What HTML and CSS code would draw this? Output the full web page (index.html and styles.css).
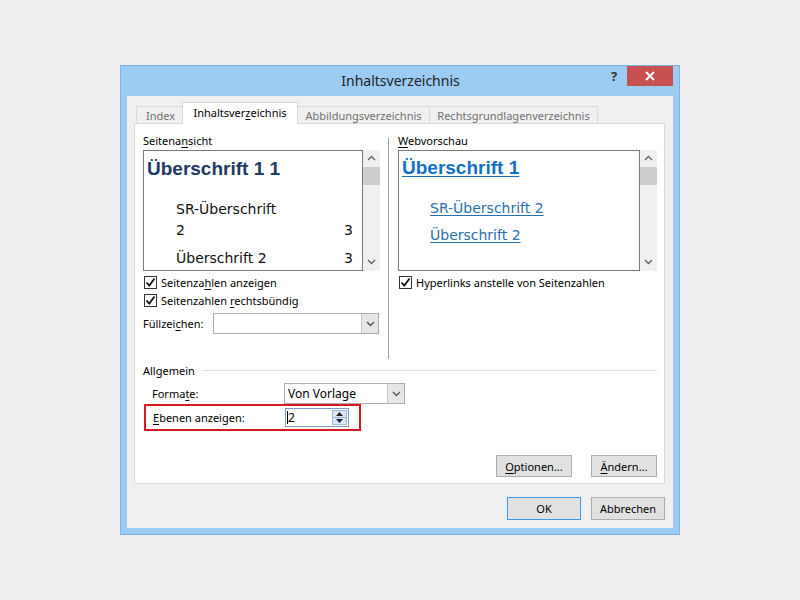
FILE: index.html
```html
<!DOCTYPE html>
<html lang="de">
<head>
  <meta charset="UTF-8">
  <title>Inhaltsverzeichnis</title>
  <link rel="stylesheet" href="styles.css">
</head>
<body>
  <div class="window">
    <div class="titlebar">
      <span class="title">Inhaltsverzeichnis</span>
      <span class="help">?</span>
      <span class="close">
        <svg width="10" height="10" viewBox="0 0 10 10"><path d="M1 1 L9 9 M9 1 L1 9" stroke="#fff" stroke-width="2"/></svg>
      </span>
    </div>

    <div class="client">
      <div class="tabs">
        <div class="tab tab-index">Index</div>
        <div class="tab tab-active">Inhaltsver<u>z</u>eichnis</div>
        <div class="tab tab-abb">Abbildungsverzeichnis</div>
        <div class="tab tab-rechts">Rechtsgrundlagenverzeichnis</div>
      </div>

      <div class="panel">
        <div class="columns">
          <div class="col col-left">
            <div class="label">Seitena<u>n</u>sicht</div>
            <div class="preview">
              <div class="preview-body print">
                <div class="h1">Überschrift 1 1</div>
                <div class="entry first">SR-Überschrift</div>
                <div class="entry row"><span>2</span><span>3</span></div>
                <div class="entry row last"><span>Überschrift 2</span><span>3</span></div>
              </div>
              <div class="scrollbar">
                <svg class="arrow" width="9" height="6" viewBox="0 0 9 6"><path d="M1 5 L4.5 1.5 L8 5" fill="none" stroke="#606060" stroke-width="1.3"/></svg>
                <div class="thumb"></div>
                <div class="track"></div>
                <svg class="arrow" width="9" height="6" viewBox="0 0 9 6"><path d="M1 1 L4.5 4.5 L8 1" fill="none" stroke="#606060" stroke-width="1.3"/></svg>
              </div>
            </div>
            <div class="check"><span class="box"><svg width="11" height="11" viewBox="0 0 11 11"><path d="M1.5 5.5 L4.3 8.5 L9.5 1.5" fill="none" stroke="#111" stroke-width="1.8"/></svg></span><span>Seitenza<u>h</u>len anzeigen</span></div>
            <div class="check"><span class="box"><svg width="11" height="11" viewBox="0 0 11 11"><path d="M1.5 5.5 L4.3 8.5 L9.5 1.5" fill="none" stroke="#111" stroke-width="1.8"/></svg></span><span>Seitenzahlen <u>r</u>echtsbündig</span></div>
            <div class="field fill">
              <span class="field-label">Füllzei<u>c</u>hen:</span>
              <div class="combo combo-fill">
                <span class="combo-value"></span>
                <span class="combo-btn"><svg width="9" height="6" viewBox="0 0 9 6"><path d="M1 1 L4.5 4.5 L8 1" fill="none" stroke="#555" stroke-width="1.4"/></svg></span>
              </div>
            </div>
          </div>

          <div class="divider"></div>

          <div class="col col-right">
            <div class="label"><u>W</u>ebvorschau</div>
            <div class="preview">
              <div class="preview-body web">
                <div class="h1"><a>Überschrift 1</a></div>
                <div class="entry first"><a>SR-Überschrift 2</a></div>
                <div class="entry"><a>Überschrift 2</a></div>
              </div>
              <div class="scrollbar">
                <svg class="arrow" width="9" height="6" viewBox="0 0 9 6"><path d="M1 5 L4.5 1.5 L8 5" fill="none" stroke="#606060" stroke-width="1.3"/></svg>
                <div class="thumb"></div>
                <div class="track"></div>
                <svg class="arrow" width="9" height="6" viewBox="0 0 9 6"><path d="M1 1 L4.5 4.5 L8 1" fill="none" stroke="#606060" stroke-width="1.3"/></svg>
              </div>
            </div>
            <div class="check"><span class="box"><svg width="11" height="11" viewBox="0 0 11 11"><path d="M1.5 5.5 L4.3 8.5 L9.5 1.5" fill="none" stroke="#111" stroke-width="1.8"/></svg></span><span>Hyperlinks anstelle von Seitenzahlen</span></div>
          </div>
        </div>

        <div class="group"><span>Allgemein</span><span class="group-line"></span></div>

        <div class="field row-formats">
          <span class="field-label">Forma<u>t</u>e:</span>
          <div class="combo combo-formats">
            <span class="combo-value">Von Vorlage</span>
            <span class="combo-btn"><svg width="9" height="6" viewBox="0 0 9 6"><path d="M1 1 L4.5 4.5 L8 1" fill="none" stroke="#555" stroke-width="1.4"/></svg></span>
          </div>
        </div>

        <div class="field row-levels">
          <span class="field-label"><u>E</u>benen anzeigen:</span>
          <div class="spinner">
            <span class="spin-value"><span class="caret"></span>2</span>
            <span class="spin-btns">
              <span class="spin-btn"><svg width="7" height="4" viewBox="0 0 7 4"><path d="M0 4 L3.5 0 L7 4 Z" fill="#222"/></svg></span>
              <span class="spin-btn"><svg width="7" height="4" viewBox="0 0 7 4"><path d="M0 0 L3.5 4 L7 0 Z" fill="#222"/></svg></span>
            </span>
          </div>
        </div>

        <div class="panel-buttons">
          <button class="btn btn-options"><u>O</u>ptionen...</button>
          <button class="btn btn-change"><u>Ä</u>ndern...</button>
        </div>
      </div>

      <div class="dialog-buttons">
        <button class="btn btn-ok">OK</button>
        <button class="btn btn-cancel">Abbrechen</button>
      </div>
    </div>
  </div>
</body>
</html>
```

FILE: styles.css
```css
body {
  margin: 0;
  background: #eeeeee;
  font-family: 'Noto Sans', sans-serif;
  font-size: 11px;
  color: #000;
}
u { text-decoration: underline; text-underline-offset: 2px; }

.window {
  margin: 65px 0 0 120px;
  width: 558px;
  height: 468px;
  background: #9ccbf3;
  border: 1px solid #7fb2e0;
  display: flex;
  flex-direction: column;
}
.titlebar {
  height: 30px;
  display: flex;
  align-items: flex-start;
}
.title {
  flex: 1;
  text-align: center;
  font-size: 14px;
  line-height: 29px;
  color: #222;
  padding-left: 72px;
}
.help {
  width: 12px;
  padding-left: 3px;
  font-size: 13px;
  font-weight: bold;
  color: #333;
  line-height: 20px;
  margin-right: 4px;
}
.close {
  width: 46px;
  height: 20px;
  background: #c75050;
  display: flex;
  align-items: center;
  justify-content: center;
  margin-right: 6px;
}

.client {
  flex: 1;
  margin: 0 6px 6px 6px;
  background: #f0f0f0;
  padding: 6px 8px 0 7px;
  display: flex;
  flex-direction: column;
}

.tabs {
  display: flex;
  align-items: flex-end;
  height: 21px;
  padding-left: 2px;
}
.tab {
  height: 16px;
  line-height: 17px;
  border: 1px solid #d9d9d9;
  border-bottom: none;
  margin-right: -1px;
  background: #f0f0f0;
  color: #707070;
  text-align: center;
}
.tab-index { width: 47px; }
.tab-abb { width: 131px; }
.tab-rechts { width: 167px; }
.tab-active {
  width: 114px;
  height: 21px;
  line-height: 19px;
  background: #fff;
  color: #000;
  position: relative;
  z-index: 1;
  margin: 0 -1px -1px -2px;
}

.panel {
  height: 350px;
  background: #fff;
  border: 1px solid #d9d9d9;
  padding: 9px 7px 0 8px;
  display: flex;
  flex-direction: column;
}

.columns {
  display: flex;
  height: 226px;
}
.col-left { width: 237px; }
.divider {
  width: 1px;
  background: #a0a0a0;
  margin: 5px 9px 0 8px;
}
.col-right { width: 259px; }

.label {
  height: 17px;
  line-height: 16px;
}
.preview {
  display: flex;
  height: 121px;
}
.preview-body {
  flex: 1;
  border: 1px solid #7a7a7a;
  background: #fff;
  overflow: hidden;
  padding: 0 9px 0 3px;
}
.scrollbar {
  width: 17px;
  background: #f0f0f0;
  display: flex;
  flex-direction: column;
  align-items: center;
}
.scrollbar .arrow { margin: 5px 0 6px; }
.scrollbar .thumb {
  width: 17px;
  height: 18px;
  background: #cdcdcd;
}
.scrollbar .track { flex: 1; }

.print .h1 {
  font-family: 'Liberation Sans', sans-serif;
  font-weight: bold;
  font-size: 19px;
  color: #1f3a63;
  margin-top: 6px;
  line-height: 24px;
}
.print .entry {
  font-family: 'DejaVu Sans', sans-serif;
  font-size: 14px;
  color: #111;
  margin-left: 29px;
  line-height: 21px;
}
.print .entry.first { margin-top: 18px; }
.print .row {
  display: flex;
  justify-content: space-between;
}
.print .row.last { margin-top: 7px; }

.web .h1 {
  font-family: 'Liberation Sans', sans-serif;
  font-weight: bold;
  font-size: 19px;
  color: #1271c4;
  margin-top: 5px;
  line-height: 24px;
}
.web a {
  text-decoration: underline;
  text-underline-offset: 2px;
}
.web .entry {
  font-family: 'DejaVu Sans', sans-serif;
  font-size: 14px;
  color: #2a6fb0;
  margin-left: 28px;
  line-height: 27px;
}
.web .entry.first { margin-top: 15px; }

.check {
  display: flex;
  align-items: center;
  height: 18px;
}
.preview + .check { margin-top: 2px; }
.box {
  width: 11px;
  height: 11px;
  border: 1px solid #333;
  background: #fff;
  margin: 0 4px 0 1px;
  display: flex;
}

.field {
  display: flex;
  align-items: center;
}
.fill { margin-top: 4px; }
.fill .field-label { width: 70px; }
.combo {
  height: 19px;
  border: 1px solid #abadb3;
  background: #fff;
  display: flex;
}
.combo-fill { width: 164px; }
.combo-value {
  flex: 1;
  padding-left: 3px;
  line-height: 19px;
  font-size: 12px;
}
.combo-btn {
  width: 16px;
  background: #e6e6e6;
  border-left: 1px solid #c8c8c8;
  display: flex;
  align-items: center;
  justify-content: center;
}

.group {
  display: flex;
  align-items: center;
  height: 16px;
  margin-top: 3px;
}
.group-line {
  flex: 1;
  height: 1px;
  background: #dcdcdc;
  margin-left: 7px;
}

.row-formats {
  margin-top: 5px;
  padding-left: 9px;
}
.row-formats .field-label,
.row-levels .field-label { width: 132px; }
.combo-formats { width: 119px; }

.row-levels {
  width: 206px;
  height: 23px;
  margin-left: 1px;
  padding-left: 7px;
  border: 2px solid #d71920;
}
.spinner {
  width: 62px;
  height: 17px;
  border: 1px solid #7a9cc6;
  background: #fff;
  display: flex;
}
.spin-value {
  flex: 1;
  line-height: 17px;
  padding-left: 1px;
  display: flex;
  align-items: center;
  font-size: 12px;
}
.caret {
  width: 1px;
  height: 13px;
  background: #000;
}
.spin-btns {
  width: 15px;
  display: flex;
  flex-direction: column;
  margin: 1px;
}
.spin-btn {
  flex: 1;
  background: #dbe6f4;
  border: 1px solid #9fb7d8;
  display: flex;
  align-items: center;
  justify-content: center;
}
.spin-btn + .spin-btn { border-top: none; }

.panel-buttons {
  display: flex;
  justify-content: flex-end;
  gap: 19px;
  margin-top: 24px;
}
.btn {
  height: 22px;
  font-family: 'Noto Sans', sans-serif;
  font-size: 11px;
  color: #000;
  background: #e1e1e1;
  border: 1px solid #adadad;
  padding: 0;
}
.btn-options { width: 76px; }
.btn-change { width: 66px; }

.dialog-buttons {
  display: flex;
  justify-content: flex-end;
  gap: 10px;
  margin-top: 13px;
}
.btn-ok, .btn-cancel { width: 74px; height: 23px; }
.btn-ok { border-color: #3c9ae8; }
```
